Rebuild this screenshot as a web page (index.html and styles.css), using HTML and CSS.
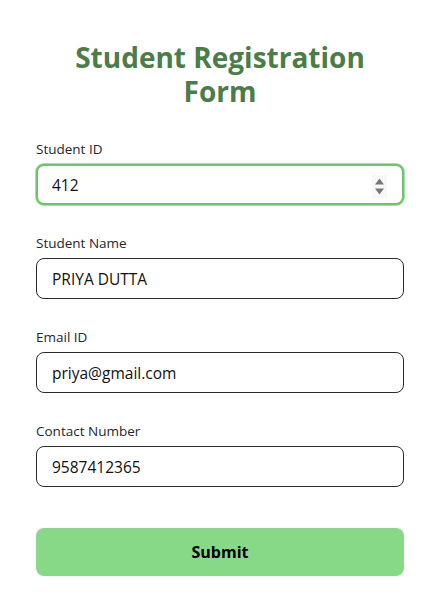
FILE: index.html
```html
<!DOCTYPE html>
<html lang="en">
<head>
<meta charset="utf-8">
<title>Student Registration Form</title>
<link rel="stylesheet" href="styles.css">
</head>
<body>
<main class="card">
  <h1 class="title">Student Registration Form</h1>
  <form class="form">
    <div class="field">
      <label class="label" for="sid">Student ID</label>
      <div class="input-wrap">
        <input class="input input-focus" id="sid" type="text" value="412">
        <span class="spinner" aria-hidden="true">
          <svg width="15" height="23" viewBox="0 0 15 23">
            <path d="M3 9.5 L7.5 3.5 L12 9.5 Z" fill="#767676"/>
            <path d="M3 13.5 L12 13.5 L7.5 19.5 Z" fill="#767676"/>
          </svg>
        </span>
      </div>
    </div>
    <div class="field">
      <label class="label" for="sname">Student Name</label>
      <input class="input" id="sname" type="text" value="PRIYA DUTTA">
    </div>
    <div class="field">
      <label class="label" for="email">Email ID</label>
      <input class="input" id="email" type="text" value="priya@gmail.com">
    </div>
    <div class="field">
      <label class="label" for="phone">Contact Number</label>
      <input class="input" id="phone" type="text" value="9587412365">
    </div>
    <button class="submit" type="button">Submit</button>
  </form>
</main>
</body>
</html>
```

FILE: styles.css
```css
* { box-sizing: border-box; }
html, body { margin: 0; padding: 0; background: #ffffff; }
body {
  font-family: "Open Sans", "Noto Sans", "Liberation Sans", sans-serif;
  color: #222;
}
.card {
  width: 368px;
  margin: 0 0 0 36px;
  padding-top: 40px;
}
.title {
  margin: 0;
  text-align: center;
  font-size: 28px;
  line-height: 34px;
  font-weight: 700;
  color: #4a7d47;
}
.form {
  display: flex;
  flex-direction: column;
  padding-top: 32px;
}
.field {
  display: flex;
  flex-direction: column;
  margin-bottom: 29px;
}
.label {
  font-size: 13.5px;
  line-height: 18px;
  font-weight: 400;
  color: #26262e;
  margin-bottom: 6px;
}
.input-wrap { position: relative; }
.input {
  display: block;
  width: 368px;
  height: 41px;
  border: 1px solid #2b2b2b;
  border-radius: 8px;
  padding: 0 15px;
  font-family: inherit;
  font-size: 15.5px;
  color: #111;
  background: #fff;
  outline: none;
}
.input-focus {
  border: 2px solid #6cc46c;
  box-shadow: 0 0 0 1px #a8dca8;
  padding-left: 14px;
}
.spinner {
  position: absolute;
  right: 17px;
  top: 11px;
  width: 15px;
  height: 23px;
  background: #f8f8f8;
  display: flex;
}
.submit {
  margin-top: 12px;
  height: 48px;
  width: 368px;
  border: none;
  border-radius: 8px;
  background: #87d987;
  font-family: inherit;
  font-size: 16px;
  font-weight: 700;
  color: #000;
}
```
